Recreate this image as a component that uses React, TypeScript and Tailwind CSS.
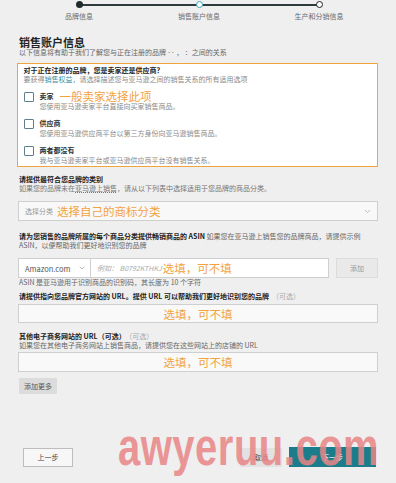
import { ChevronDown } from 'lucide-react'

function Step({ label, dot }: { label: string; dot: string }) {
  return (
    <div className="relative flex flex-col items-center">
      <div className={`mt-px h-[7px] w-[7px] rounded-full ${dot}`} />
      <div className="mt-[4px] text-[7px] leading-[9px] text-[#6b6b6b]">{label}</div>
    </div>
  )
}

function Option({ title, desc, note }: { title: string; desc: string; note?: string }) {
  return (
    <div className="flex items-start">
      <div className="mt-[0.5px] h-[10px] w-[10px] shrink-0 rounded-[1px] border border-[#5f7f8c] bg-white" />
      <div className="ml-[6px]">
        <div className="flex h-[11px] items-center">
          <span className="text-[7px] font-bold leading-[11px] text-[#333]">{title}</span>
          {note && (
            <span className="ml-[6px] text-[11.5px] leading-[11px] text-[#f2a33f]">{note}</span>
          )}
        </div>
        <div className="text-[7px] leading-[9px] text-[#8a8a8a]">{desc}</div>
      </div>
    </div>
  )
}

export default function App() {
  return (
    <div className="relative h-[483px] w-[396px] overflow-hidden bg-[#efefef] font-['Noto_Sans_CJK_SC',sans-serif] text-[#333]">
      {/* Stepper */}
      <div className="relative ml-[19px] grid w-[360px] grid-cols-3">
        <div className="absolute left-[60px] right-[60px] top-[4px] h-[1.5px] bg-[#2f3a3c]" />
        <Step label="品牌信息" dot="bg-[#1f2a2c]" />
        <Step label="销售账户信息" dot="border-[1.5px] border-[#3fa9bb] bg-white" />
        <Step label="生产和分销信息" dot="border-[1.5px] border-[#222] bg-white" />
      </div>

      <div className="ml-[18px] w-[360px]">
        <h1 className="mt-[16px] pl-px text-[11px] font-bold leading-[11px] text-[#1f2526]">销售账户信息</h1>
        <p className="pl-px text-[7px] leading-[9px] text-[#666]">
          以下信息将有助于我们了解您与正在注册的品牌 ‥ ， ：之间的关系
        </p>

        {/* Seller / vendor box */}
        <div className="-ml-px mt-[6px] w-[361px] border-[1.5px] border-[#f0a43c] bg-white pb-[1px] pl-[5.5px] pt-[2px]">
          <div className="text-[7px] font-bold leading-[9px] text-[#222]">
            对于正在注册的品牌，您是卖家还是供应商？
          </div>
          <div className="text-[7px] leading-[9px] text-[#8a8a8a]">
            要获得<span className="text-[#3a8fa3]">销售权益</span>，请选择描述您与亚马逊之间的销售关系的所有适用选项
          </div>
          <div className="mt-[7px] flex flex-col gap-[7px]">
            <Option title="卖家" note="一般卖家选择此项" desc="您使用亚马逊卖家平台直接向买家销售商品。" />
            <Option title="供应商" desc="您使用亚马逊供应商平台以第三方身份向亚马逊销售商品。" />
            <Option title="两者都没有" desc="我与亚马逊卖家平台或亚马逊供应商平台没有销售关系。" />
          </div>
        </div>

        {/* Category */}
        <div className="mt-[7.5px] pl-px text-[7px] font-bold leading-[9px] text-[#222]">请提供最符合您品牌的类别</div>
        <div className="mt-[0.5px] pl-px text-[7px] leading-[9px] text-[#777]">
          如果您的品牌未在<span className="underline decoration-dotted">亚马逊上销售</span>，请从以下列表中选择适用于您品牌的商品分类。
        </div>
        <div className="mt-[8px] flex h-[20px] items-center border border-[#cfcfcf] bg-[#f8f8f8] pl-[6px] pr-[5px]">
          <span className="text-[7px] leading-[9px] text-[#999]">选择分类</span>
          <span className="ml-[4px] text-[11.5px] leading-[12px] text-[#f2a33f]">选择自己的商标分类</span>
          <ChevronDown className="ml-auto h-[9px] w-[9px] text-[#aaa]" strokeWidth={2} />
        </div>

        {/* ASIN */}
        <div className="mt-[11px] pl-px text-[7px] leading-[9px] text-[#666]">
          <span className="font-bold text-[#222]">请为您销售的品牌所属的每个商品分类提供畅销商品的 ASIN</span> 如果您在亚马逊上销售您的品牌商品，请提供示例
          <br />
          ASIN，以便帮助我们更好地识别您的品牌
        </div>
        <div className="mt-[8px] flex h-[20px] items-stretch">
          <div className="flex w-[73px] items-center border border-[#cfcfcf] bg-white pl-[6px] pr-[4px]">
            <span className="text-[7.5px] leading-[9px] text-[#555]">Amazon.com</span>
            <ChevronDown className="ml-auto h-[8px] w-[8px] text-[#999]" strokeWidth={2} />
          </div>
          <div className="-ml-px flex w-[239px] items-center border border-[#cfcfcf] bg-white pl-[6px]">
            <span className="text-[7px] italic leading-[9px] text-[#aaa]">例如： B0792KTHKJ</span>
            <span className="ml-[1px] text-[11.5px] leading-[12px] text-[#f2a33f]">选填，可不填</span>
          </div>
          <div className="ml-auto flex w-[42px] items-center justify-center border border-[#dcdcdc] bg-[#e9e9e9] text-[7px] text-[#999]">
            添加
          </div>
        </div>
        <div className="pl-px text-[7px] leading-[9px] text-[#666]">ASIN 是亚马逊用于识别商品的识别码，其长度为 10 个字符</div>

        {/* Website */}
        <div className="mt-[4.5px] pl-px text-[7px] leading-[9px]">
          <span className="font-bold text-[#222]">请提供指向您品牌官方网站的 URL。提供 URL 可以帮助我们更好地识别您的品牌</span>
          <span className="ml-[3px] text-[#aaa]">（可选）</span>
        </div>
        <div className="mt-[3.5px] flex h-[19px] items-center justify-center border border-[#cfcfcf] bg-[#f9f9f9]">
          <span className="text-[11.5px] leading-[12px] text-[#f2a33f]">选填，可不填</span>
        </div>

        {/* Other sites */}
        <div className="mt-[9px] pl-px text-[7px] leading-[9px]">
          <span className="font-bold text-[#222]">其他电子商务网站的 URL（可选）</span>
          <span className="ml-[3px] text-[#aaa]">（可选）</span>
        </div>
        <div className="pl-px text-[7px] leading-[9px] text-[#666]">
          如果您在其他电子商务网站上销售商品，请提供您在这些网站上的店铺的 URL
        </div>
        <div className="mt-[2px] flex h-[20px] items-center justify-center border border-[#cfcfcf] bg-[#f9f9f9]">
          <span className="text-[11.5px] leading-[12px] text-[#f2a33f]">选填，可不填</span>
        </div>
        <div className="ml-px mt-[6px] flex h-[16px] w-[38px] items-center justify-center rounded-[1px] bg-[#dcdcdc] text-[7px] text-[#555]">
          添加更多
        </div>
      </div>

      {/* Footer buttons */}
      <div className="ml-[23px] mt-[53px] flex w-[353px] items-center">
        <div className="flex h-[19px] w-[50px] items-center justify-center border border-[#bdbdbd] bg-[#f7f7f7] text-[7px] text-[#444]">
          上一步
        </div>
        <div className="ml-auto flex h-[19px] w-[42px] items-center justify-center bg-[#e2e2e2] text-[7px] text-[#444]">
          取消
        </div>
        <div className="ml-[7px] flex h-[20px] w-[87px] items-center justify-center bg-[#1b7d8c] text-[7px] text-white">
          下一步
        </div>
      </div>

      {/* Watermark */}
      <div className="pointer-events-none absolute left-[118px] top-[433px] origin-bottom scale-y-[1.3] font-['Liberation_Sans',sans-serif] text-[40px] font-bold leading-[40px] tracking-[0.5px] text-[#e98686] opacity-85">
        awyeruu.com
      </div>
    </div>
  )
}
